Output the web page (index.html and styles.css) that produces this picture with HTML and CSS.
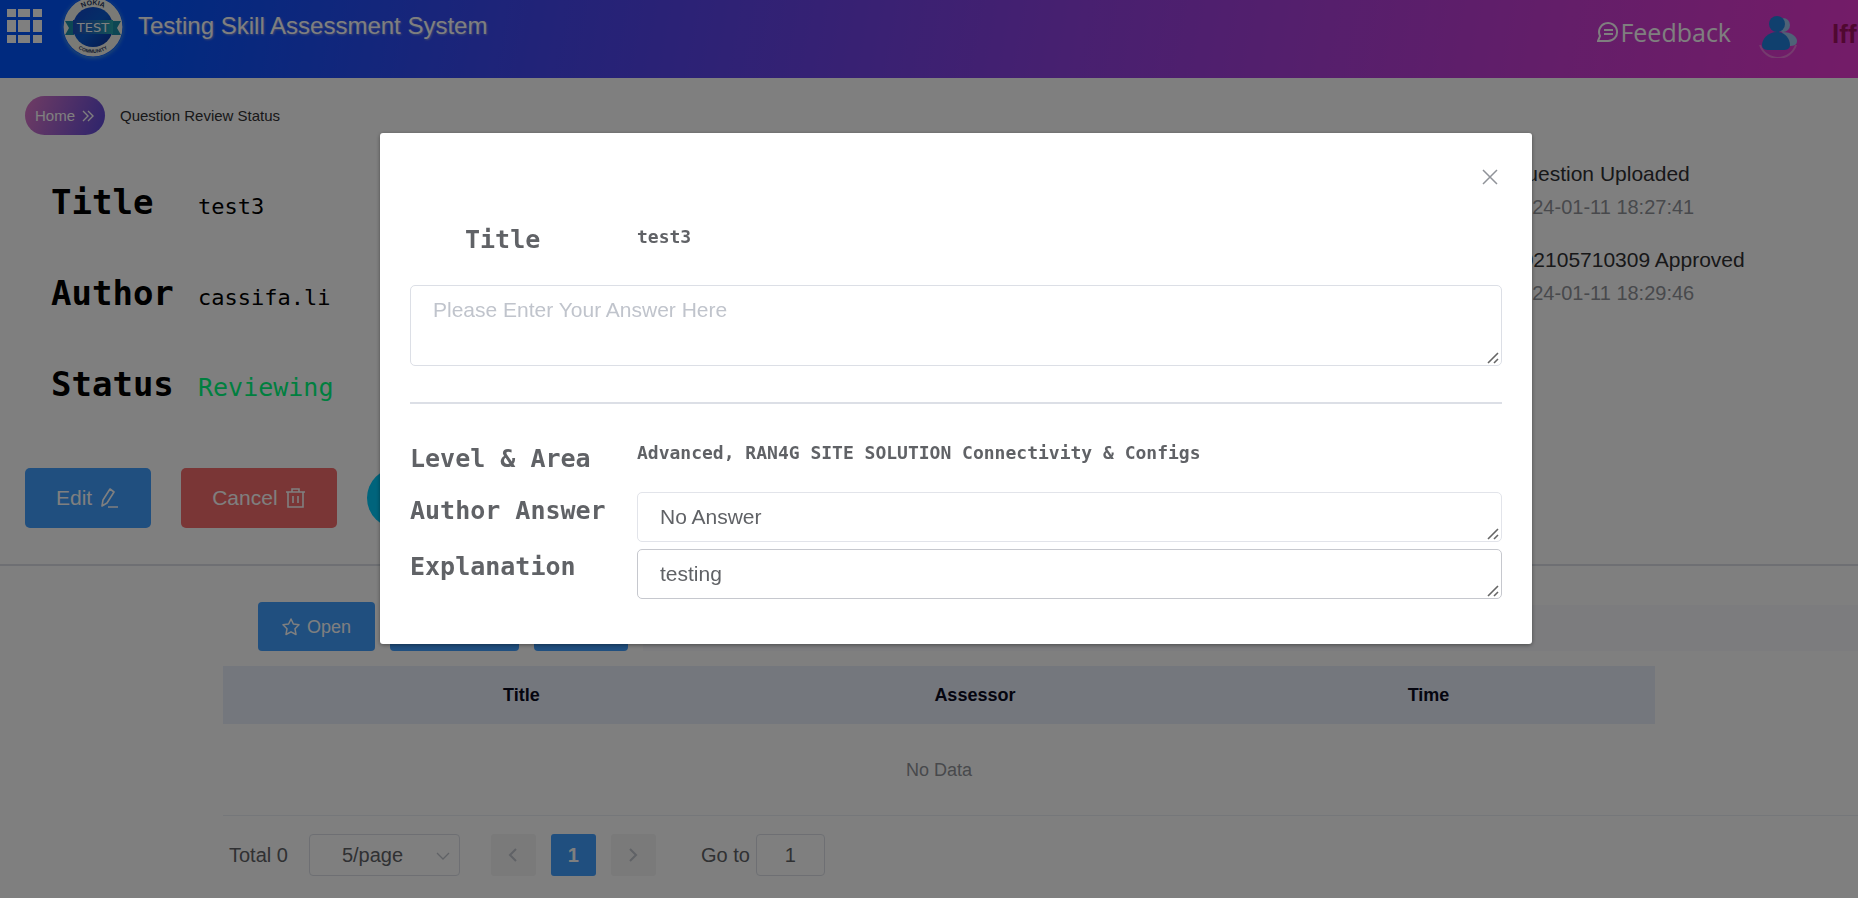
FILE: index.html
```html
<!DOCTYPE html>
<html lang="en">
<head>
<meta charset="utf-8">
<title>Testing Skill Assessment System</title>
<link rel="stylesheet" href="styles.css">
</head>
<body>
<header class="topbar">
  <button class="apps" aria-label="Applications">
    <svg viewBox="0 0 35 34" width="35" height="34" fill="#fff"><path d="M0 0h9v8H0zM11 0h12v8H11zM26 0h9v8h-9zM0 11h9v12H0zM11 11h12v12H11zM26 11h9v12h-9zM0 26h9v8H0zM11 26h12v8H11zM26 26h9v8h-9z"/></svg>
  </button>
  <svg class="logo" viewBox="0 0 60 60" width="60" height="60">
    <defs>
      <linearGradient id="disc" x1="0" y1="0" x2="1" y2="1"><stop offset="0" stop-color="#1446c8"/><stop offset=".5" stop-color="#0a5cd2"/><stop offset="1" stop-color="#0a2f9c"/></linearGradient>
      <linearGradient id="band"><stop offset="0" stop-color="#1c4fc0"/><stop offset=".5" stop-color="#2070c0"/><stop offset="1" stop-color="#2aa8ac"/></linearGradient>
      <path id="arcTop" d="M8 30a22 22 0 0 1 44 0"/>
      <path id="arcBottom" d="M4 30a26 26 0 0 0 52 0"/>
    </defs>
    <circle cx="30" cy="30" r="29.5" fill="#f4f4ec"/>
    <circle cx="30" cy="30" r="20" fill="url(#disc)"/>
    <path d="M2 24h9v14H2l4-7zM58 24h-9v14h9l-4-7z" fill="#1a8fa8"/>
    <path d="M10 23h40v14H10z" fill="url(#band)"/>
    <g fill="#26345c" font-family="Liberation Sans, sans-serif" font-size="7" font-weight="700" text-anchor="middle">
      <text><textPath href="#arcTop" startOffset="50%">NOKIA</textPath></text>
      <text font-size="5"><textPath href="#arcBottom" startOffset="50%">COMMUNITY</textPath></text>
    </g>
    <text x="30" y="35" fill="#fff" font-family="DejaVu Sans, sans-serif" font-size="13" text-anchor="middle">TEST</text>
  </svg>
  <h1 class="brand">Testing Skill Assessment System</h1>
  <a class="feedback" href="#">
    <svg viewBox="0 0 22 22" width="22" height="22" fill="none" stroke="#fff" stroke-width="2"><path d="M1 20h10a9 9 0 1 0-8-5zM7 9h9M7 13h9"/></svg>Feedback</a>
  <svg class="avatar" viewBox="0 0 42 44" width="42" height="44">
    <path d="M3 31a19 19 0 0 0 36 0" fill="none" stroke="#f2a0e4" stroke-width="2" opacity=".6"/>
    <circle cx="26" cy="11" r="7" fill="#9cc4ee"/><path d="M25 18c10 0 15 5 15 9 0 4-3 5-8 5z" fill="#9cc4ee"/>
    <circle cx="20" cy="10" r="8" fill="#2080dc"/><path d="M20 18c8 0 13 7 13 13 0 4-3 5-7 5H12c-4 0-7-1-7-5 0-6 6-13 15-13z" fill="#2080dc"/>
  </svg>
  <span class="user">lff</span>
</header>

<main>
  <section class="summary">
    <div class="details">
      <nav class="crumbs"><a class="home" href="#">Home
        <svg viewBox="0 0 12 12" width="12" height="12" fill="none" stroke="#fff" stroke-width="1.4"><path d="M1 1l5 5-5 5M6 1l5 5-5 5"/></svg></a><span>Question Review Status</span></nav>
      <dl class="facts">
        <div class="fact"><dt>Title</dt><dd>test3</dd></div>
        <div class="fact"><dt>Author</dt><dd>cassifa.li</dd></div>
        <div class="fact"><dt>Status</dt><dd class="reviewing">Reviewing</dd></div>
      </dl>
      <div class="actions">
        <button class="btn large primary">Edit
          <svg viewBox="0 0 21 21" width="21" height="21" fill="none" stroke="#fff" stroke-width="1.6" stroke-linejoin="round"><path d="M3 18l1-6L11 1l4 3-7 11zM3 18l5-3M9 19h10"/></svg></button>
        <button class="btn large danger">Cancel
          <svg viewBox="0 0 21 21" width="21" height="21" fill="none" stroke="#fff" stroke-width="1.6"><path d="M1 4h19M7 4V1h7v3M3 4v15h15V4M8 8v7M13 8v7"/></svg></button>
        <button class="round" aria-label="More"></button>
      </div>
    </div>
    <ul class="timeline">
      <li><h2>Question Uploaded</h2><time>2024-01-11 18:27:41</time></li>
      <li><h2>102105710309 Approved</h2><time>2024-01-11 18:29:46</time></li>
    </ul>
  </section>

  <section class="reviews">
    <div class="toolbar">
      <button class="btn primary"><svg viewBox="0 0 18 18" width="18" height="18" fill="none" stroke="#fff" stroke-width="1.5" stroke-linejoin="round"><path d="M9 1l2.400 5 5.600.8-4 4 1 5.700-5-2.700-5 2.700 1-5.700-4-4 5.600-.8z"/></svg>Open</button>
      <button class="btn primary wide" aria-label="Review"></button>
      <button class="btn primary narrow" aria-label="Close review"></button>
      <div class="strip"></div>
    </div>
    <div class="table-wrap">
      <table>
        <colgroup><col class="pick"><col><col><col></colgroup>
        <thead><tr><th></th><th>Title</th><th>Assessor</th><th>Time</th></tr></thead>
        <tbody><tr><td colspan="4">No Data</td></tr></tbody>
      </table>
    </div>
    <div class="pager">
      <span>Total 0</span>
      <span class="select-box"><select aria-label="Page size"><option>5/page</option></select>
        <svg viewBox="0 0 14 8" width="14" height="8" fill="none" stroke="#c0c4cc" stroke-width="1.3"><path d="M1 1l6 6 6-6"/></svg></span>
      <div class="pages">
        <button class="page" aria-label="Previous" disabled><svg viewBox="0 0 10 14" width="10" height="14" fill="none" stroke="#c0c4cc" stroke-width="2"><path d="M8 1L2 7l6 6"/></svg></button>
        <button class="page current">1</button>
        <button class="page" aria-label="Next" disabled><svg viewBox="0 0 10 14" width="10" height="14" fill="none" stroke="#c0c4cc" stroke-width="2"><path d="M2 1l6 6-6 6"/></svg></button>
      </div>
      <label class="goto">Go to <input type="text" value="1"></label>
    </div>
  </section>
</main>

<div class="overlay">
  <div class="dialog" role="dialog" aria-label="Question">
    <div class="dialog-head">
      <button class="close" aria-label="Close"><svg viewBox="0 0 16 16" width="16" height="16" fill="none" stroke="#909399" stroke-width="1.500"><path d="M1 1l14 14M15 1L1 15"/></svg></button>
    </div>
    <div class="row title-row"><label class="name indent" for="answer">Title</label><span class="value">test3</span></div>
    <textarea id="answer" class="answer" placeholder="Please Enter Your Answer Here"></textarea>
    <hr>
    <div class="row level-row"><span class="name">Level &amp; Area</span><span class="value">Advanced, RAN4G SITE SOLUTION Connectivity &amp; Configs</span></div>
    <div class="row"><label class="name" for="author-answer">Author Answer</label><textarea id="author-answer" class="short">No Answer</textarea></div>
    <div class="row"><label class="name" for="explanation">Explanation</label><textarea id="explanation" class="short strong">testing</textarea></div>
  </div>
</div>
</body>
</html>
```
FILE: styles.css
```css
* { box-sizing: border-box; }
body {
  margin: 0;
  overflow: hidden;
  background: #fff;
  color: #303133;
  font: 20px/24px "Liberation Sans", Arial, sans-serif;
}
button, input, select, textarea { font: inherit; }
button { border: 0; padding: 0; cursor: pointer; }
svg { flex: none; }
h1, h2, dl, dd, ul { margin: 0; padding: 0; font-weight: 400; list-style: none; }

.topbar {
  display: flex;
  align-items: flex-start;
  height: 78px;
  padding-left: 7px;
  overflow: hidden;
  background: linear-gradient(100deg, #0054ff 0%, #0054ff 8%, #4646f0 30%, #9040e0 58%, #c83cd2 84%, #e838d0 100%);
}
.apps { margin-top: 9px; background: none; }
.logo { margin: -3px 15px 0 21px; border-radius: 50%; box-shadow: 0 1px 4px #50a0e0; }
.brand { margin: 13px auto 0 0; color: #fff; font-size: 24px; line-height: 26px; text-shadow: 1px 1px 2px #8090e0; white-space: nowrap; }
.feedback {
  display: flex;
  align-items: center;
  gap: 1px;
  margin-top: 15px;
  color: #fff;
  font: 500 25px/34px "Open Sans", "Noto Sans", sans-serif;
  text-decoration: none;
}
.avatar { margin: 14px 33px 0 26px; }
.user { width: 26px; margin-top: 19px; color: #a01060; font: 700 26px/30px "Liberation Sans", Arial, sans-serif; white-space: nowrap; }

.summary {
  display: grid;
  grid-template-columns: 1510fr 348fr;
  padding-bottom: 36px;
  border-bottom: 2px solid #dcdfe6;
}
.details { padding: 18px 0 0 25px; }
.crumbs { display: flex; align-items: center; gap: 15px; font-size: 15px; }
.home {
  display: flex;
  align-items: center;
  gap: 7px;
  height: 39px;
  padding: 0 11px 0 10px;
  border-radius: 20px;
  background: linear-gradient(110deg, #e078c8, #5a48d8);
  color: #fff;
  text-decoration: none;
}
.facts { margin-top: 22px; padding-left: 26px; color: #000; font-family: "DejaVu Sans Mono", "Liberation Mono", monospace; }
.fact { display: flex; align-items: baseline; line-height: 91px; height: 91px; }
.fact dt { width: 147px; font-size: 34px; font-weight: 700; }
.fact dd { font-size: 22px; }
.fact .reviewing { color: springgreen; font-size: 25px; }
.actions { display: flex; gap: 30px; margin-top: 38px; }
.btn {
  display: flex;
  align-items: center;
  justify-content: center;
  gap: 7px;
  height: 49px;
  padding: 0 24px;
  border-radius: 4px;
  color: #fff;
  font-size: 18px;
}
.btn.large { height: 60px; padding: 0 31px; font-size: 21px; border-radius: 5px; }
.primary { background: #409eff; }
.danger { background: #f56c6c; }
.round { width: 60px; height: 60px; border-radius: 50%; background: #00c8f8; }
.wide { width: 129px; }
.narrow { width: 94px; }

.timeline { display: flex; flex-direction: column; gap: 29px; padding-top: 84px; white-space: nowrap; }
.timeline h2 { margin-bottom: 9px; font-size: 21px; line-height: 24px; }
.timeline time { display: block; color: #909399; font-size: 20px; }

.reviews { padding: 36px 0 0 12%; }
.toolbar { display: flex; gap: 15px; padding-left: 35px; }
.strip { flex: 1; height: 46px; margin-top: 3px; background: #f8f9fd; }
.table-wrap { margin-top: 15px; border-bottom: 1px solid #ebeef5; }
table { width: 87.6%; border-collapse: collapse; table-layout: fixed; font-size: 18px; }
.pick { width: 5%; }
th { height: 58px; padding: 0; background: #e8eefa; color: #0a0a1e; }
td { height: 91px; padding: 0; color: #909399; text-align: center; }
.pager { display: flex; align-items: center; height: 42px; margin: 18px 0 22px; padding-left: 6px; color: #606266; }
.select-box { position: relative; width: 151px; margin: 0 31px 0 21px; }
.select-box svg { position: absolute; right: 10px; top: 18px; }
select, input {
  width: 100%;
  height: 42px;
  border: 1px solid #dcdfe6;
  border-radius: 4px;
  background: #fff;
  color: #606266;
}
select { display: block; padding: 0 32px; appearance: none; }
.pages { display: flex; gap: 15px; margin-right: 45px; }
.page { width: 45px; height: 42px; border-radius: 3px; background: #f4f4f5; }
.current { background: #409eff; color: #fff; font-weight: 700; }
.goto { display: flex; align-items: center; gap: 6px; white-space: nowrap; }
.goto input { width: 69px; text-align: center; }

.overlay { position: fixed; inset: 0; z-index: 10; background: rgba(0, 0, 0, .5); }
.dialog {
  width: 62%;
  margin: 133px 0 0 380px;
  padding: 0 30px 39px;
  border-radius: 3px;
  background: #fff;
  box-shadow: 0 1px 4px rgba(0, 0, 0, .4);
  color: #606266;
}
.dialog-head { display: flex; justify-content: flex-end; height: 92px; padding: 36px 4px 0 0; }
.close { height: 16px; background: none; line-height: 0; }
.row { display: flex; }
.name { flex: none; width: 227px; padding-top: 4px; font: 700 25px/30px "DejaVu Sans Mono", "Liberation Mono", monospace; }
.indent { padding-left: 55px; }
.value { font: 700 18px/24px "DejaVu Sans Mono", "Liberation Mono", monospace; }
.title-row { height: 60px; }
.title-row .name { padding-top: 0; }
textarea {
  display: block;
  width: 100%;
  padding: 8px 22px;
  border: 1px solid #dcdfe6;
  border-radius: 5px;
  background: #fff;
  color: #606266;
  font-size: 21px;
  line-height: 32px;
  resize: vertical;
}
textarea::placeholder { color: #c0c4cc; }
textarea::-webkit-resizer {
  background: url("data:image/svg+xml,%3Csvg xmlns='http://www.w3.org/2000/svg' width='15' height='15'%3E%3Cpath d='M2 13L12 3M8 13l4-4' fill='none' stroke='%23666' stroke-width='1.6'/%3E%3C/svg%3E") no-repeat;
}
.answer { height: 81px; }
hr { height: 2px; margin: 36px 0 37px; border: 0; background: #dcdfe6; }
.level-row { height: 51px; }
.level-row .name { padding-top: 3px; }
.short { flex: 1; height: 50px; margin-bottom: 6px; overflow: hidden; border-color: #e2e4ea; }
.strong { margin: 1px 0 6px; border-color: #c6c8ce; }
```
